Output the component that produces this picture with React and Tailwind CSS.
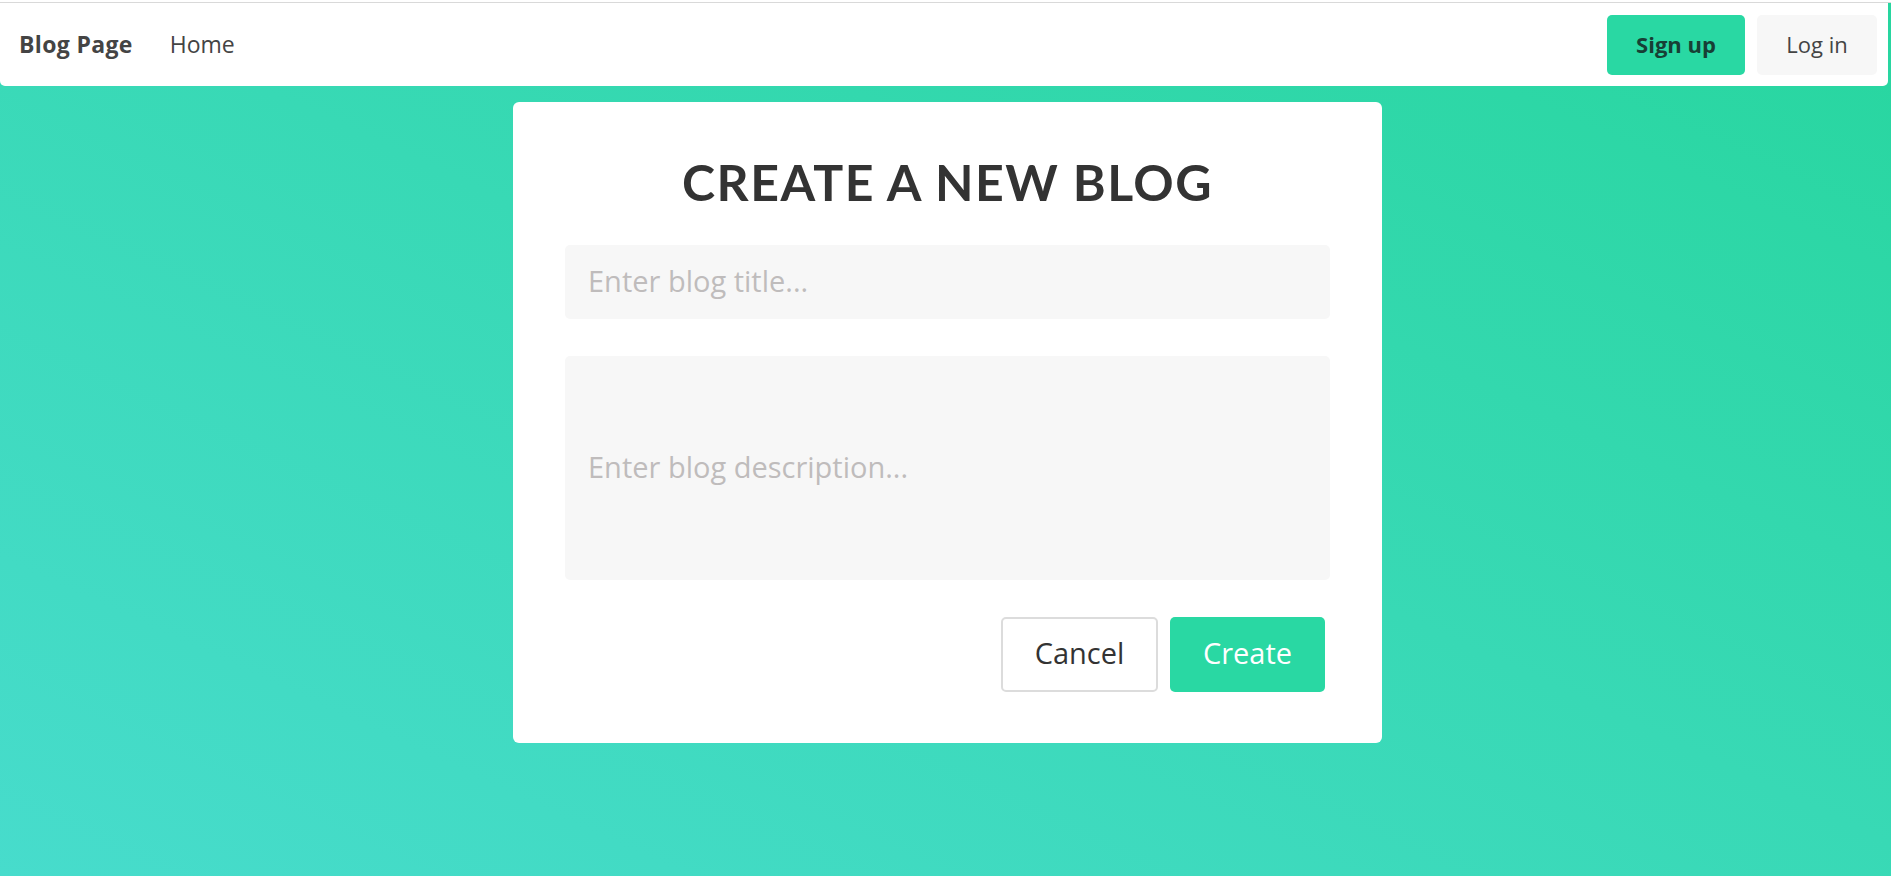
import React from "react";

export default function App() {
  return (
    <div
      className="min-h-screen w-full bg-gradient-to-tr from-[#47dccc] to-[#27d69f]"
      style={{ fontFamily: "'Open Sans', Lato, sans-serif" }}
    >
      <div className="h-[2px] bg-white" />
      <div className="h-px bg-[#d9d9d9]" />
      <nav className="mr-[3px] flex h-[83px] items-center justify-between rounded-b-[5px] bg-white pl-[19px] pr-[11px]">
        <div className="flex items-center gap-[37px] text-[23px] text-[#444444]">
          <span className="font-bold tracking-[0.015em]">Blog Page</span>
          <span>Home</span>
        </div>
        <div className="flex items-center gap-[12px] text-[22px]">
          <button className="h-[60px] w-[138px] rounded-[5px] bg-[#29d8a3] font-bold text-[#173f35]">
            Sign up
          </button>
          <button className="h-[60px] w-[120px] rounded-[5px] bg-[#f7f7f7] text-[#444444]">
            Log in
          </button>
        </div>
      </nav>
      <div className="flex justify-center pl-[4px] pt-[16px]">
        <div className="w-[869px] rounded-[6px] bg-white px-[52px] pb-[51px] pt-[50px]">
          <h1
            className="text-center text-[50px] font-bold leading-[60px] tracking-[0.03em] text-[#333333]"
            style={{ fontFamily: "Lato, sans-serif" }}
          >
            CREATE A NEW BLOG
          </h1>
          <input
            className="mt-[33px] block h-[74px] w-full rounded-[5px] bg-[#f7f7f7] pb-[4px] pl-[23px] text-[29px] text-[#333333] outline-none placeholder:text-[#bfbcbc]"
            placeholder="Enter blog title..."
          />
          <textarea
            className="mt-[37px] block h-[224px] w-full resize-none rounded-[5px] bg-[#f7f7f7] px-[23px] pt-[89px] text-[29px] leading-[1.5] text-[#333333] outline-none placeholder:text-[#bfbcbc]"
            placeholder="Enter blog description..."
          />
          <div className="mr-[5px] mt-[37px] flex justify-end gap-[12px] text-[29px]">
            <button className="h-[75px] w-[157px] rounded-[5px] border-2 border-[#dcdcdc] bg-white pb-[3px] text-[#333333]">
              Cancel
            </button>
            <button className="h-[75px] w-[155px] rounded-[5px] bg-[#29d8a3] pb-[3px] text-white">
              Create
            </button>
          </div>
        </div>
      </div>
    </div>
  );
}
